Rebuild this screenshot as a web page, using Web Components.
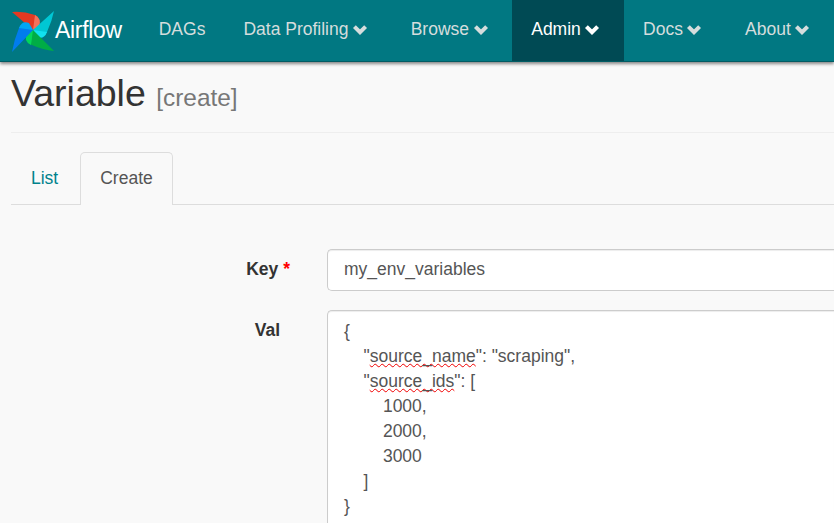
<!doctype html>
<html lang="en">
  <head>
    <meta charset="utf-8">
    <style>
      html, body {
        margin: 0;
        height: 100%;
        overflow: hidden;
        background: #f9f9f9;
      }
      body {
        font-family: "Liberation Sans", Arial, sans-serif;
        font-size: 17.5px;
        color: #333;
      }
    </style>
  </head>
  <body>
    <top-nav>
      <nav-item>DAGs</nav-item>
      <nav-item menu>Data Profiling</nav-item>
      <nav-item menu>Browse</nav-item>
      <nav-item menu active>Admin</nav-item>
      <nav-item menu>Docs</nav-item>
      <nav-item menu>About</nav-item>
    </top-nav>
    <page-title sub="[create]">Variable</page-title>
    <tab-bar>
      <tab-link>List</tab-link>
      <tab-link active>Create</tab-link>
    </tab-bar>
    <form-row label="Key" required>
      <div class="field">my_env_variables</div>
    </form-row>
    <form-row label="Val" tall>
      <code-box></code-box>
    </form-row>

    <script>
class TopNav extends HTMLElement {
  constructor() {
    super();
    this.attachShadow({ mode: 'open' });
    this.shadowRoot.innerHTML = `
      <style>
        :host {
          display: flex;
          height: 61px;
          background: #017882;
          box-shadow: 0 2px 3px rgba(0, 0, 0, .45);
          border-bottom: 1px solid #015c64;
          position: relative;
        }
        .brand {
          display: flex;
          align-items: center;
          width: 140.5px;
          padding-left: 11px;
          box-sizing: border-box;
          color: #fff;
          font-size: 23px;
          letter-spacing: -.3px;
        }
        svg { width: 44px; height: 44px; flex: none; margin-top: -1px; }
      </style>
      <div class="brand">
        <svg viewBox="0 0 44 44">
          <path d="M1 4 L22 22 L28 11 Q27 8 24 7 Q12 3 1 4 Z" fill="#e43921"/>
          <path d="M24 7 Q31 11 28 18 L22 22 Z" fill="#f4725b"/>
          <path d="M43 3 L22 22 L32 28 Q35 27 36 24 Q41 13 43 3 Z" fill="#00c7d4"/>
          <path d="M36 24 Q33 32 26 29 L22 22 Z" fill="#11e1ee"/>
          <path d="M43 43 L22 22 L16 32 Q17 36 21 37 Q32 42 43 43 Z" fill="#00ad46"/>
          <path d="M20 37 Q12 33 16 26 L22 22 Z" fill="#04d659"/>
          <path d="M1 44 L22 22 L12 16 Q9 17 8 20 Q3 32 1 44 Z" fill="#017cee"/>
          <path d="M8 20 Q11 12 18 15 L22 22 Z" fill="#00a7f5"/>
        </svg>
        <span>Airflow</span>
      </div>
      <slot></slot>
    `;
  }
}
customElements.define('top-nav', TopNav);

class NavItem extends HTMLElement {
  constructor() {
    super();
    this.attachShadow({ mode: 'open' });
    const chevron = this.hasAttribute('menu')
      ? `<svg viewBox="0 0 16 11"><path d="M2.4 2.6 L8 8.2 L13.6 2.6" fill="none" stroke="currentColor" stroke-width="4"/></svg>`
      : '';
    this.shadowRoot.innerHTML = `
      <style>
        :host {
          display: flex;
          align-items: center;
          gap: 3.5px;
          padding: 0 19px 2px;
          color: #d5dddd;
          white-space: nowrap;
        }
        :host([active]) {
          background: #004a54;
          color: #fff;
        }
        svg { width: 16px; height: 11px; margin: 0 4.7px 1px 0; }
      </style>
      <slot></slot>${chevron}
    `;
  }
}
customElements.define('nav-item', NavItem);

class PageTitle extends HTMLElement {
  constructor() {
    super();
    this.attachShadow({ mode: 'open' });
    this.shadowRoot.innerHTML = `
      <style>
        :host {
          display: block;
          margin-left: 11px;
          padding: 7px 0 14px;
          height: 49px;
          line-height: 49px;
          font-size: 37.5px;
          color: #333;
          border-bottom: 1px solid #eee;
          white-space: nowrap;
        }
        small { font-size: 24.4px; color: #777; }
      </style>
      <slot></slot> <small>${this.getAttribute('sub')}</small>
    `;
  }
}
customElements.define('page-title', PageTitle);

class TabBar extends HTMLElement {
  constructor() {
    super();
    this.attachShadow({ mode: 'open' });
    this.shadowRoot.innerHTML = `
      <style>
        :host {
          display: flex;
          margin: 19px 0 0 11px;
          height: 52px;
          border-bottom: 1px solid #ddd;
        }
      </style>
      <slot></slot>
    `;
  }
}
customElements.define('tab-bar', TabBar);

class TabLink extends HTMLElement {
  constructor() {
    super();
    this.attachShadow({ mode: 'open' });
    this.shadowRoot.innerHTML = `
      <style>
        :host {
          display: block;
          box-sizing: border-box;
          height: 53px;
          margin-right: 2px;
          padding: 0 19px;
          line-height: 50px;
          color: #00828c;
          border: 1px solid transparent;
          border-bottom: 0;
          border-radius: 5px 5px 0 0;
        }
        :host([active]) {
          color: #555;
          background: #f9f9f9;
          border-color: #ddd;
        }
      </style>
      <slot></slot>
    `;
  }
}
customElements.define('tab-link', TabLink);

class FormRow extends HTMLElement {
  constructor() {
    super();
    this.attachShadow({ mode: 'open' });
    const star = this.hasAttribute('required') ? `<span class="star">*</span>` : '';
    this.shadowRoot.innerHTML = `
      <style>
        :host {
          display: grid;
          grid-template-columns: 290px 1fr;
          column-gap: 37px;
          margin-top: 44px;
        }
        :host([tall]) { margin-top: 19px; }
        .label {
          font-weight: bold;
          text-align: right;
          color: #333;
          padding-top: 10px;
          line-height: 20px;
        }
        :host([tall]) .label { padding-right: 10px; }
        .star { color: #f00; }
        ::slotted(.field) {
          box-sizing: border-box;
          height: 42px;
          line-height: 38px;
          padding: 0 16px;
          background: #fff;
          border: 1px solid #ccc;
          border-right: 0;
          border-radius: 5px 0 0 5px;
          box-shadow: inset 0 1px 1px rgba(0, 0, 0, .075);
          color: #555;
        }
      </style>
      <div class="label">${this.getAttribute('label')} ${star}</div>
      <slot></slot>
    `;
  }
}
customElements.define('form-row', FormRow);

class CodeBox extends HTMLElement {
  constructor() {
    super();
    this.attachShadow({ mode: 'open' });
    this.shadowRoot.innerHTML = `<style>
        :host {
          display: block;
          box-sizing: border-box;
          height: 230px;
          padding: 8px 16px;
          background: #fff;
          border: 1px solid #ccc;
          border-right: 0;
          border-radius: 5px 0 0 0;
          box-shadow: inset 0 1px 1px rgba(0, 0, 0, .075);
          color: #555;
          white-space: pre;
          line-height: 25px;
        }
        .typo { text-decoration: underline wavy #f00000 1.2px; text-underline-offset: 1px; }
      </style>{
    "<span class="typo">source_name</span>": "scraping",
    "<span class="typo">source_ids</span>": [
        1000,
        2000,
        3000
    ]
}`;
  }
}
customElements.define('code-box', CodeBox);
    </script>
  </body>
</html>
